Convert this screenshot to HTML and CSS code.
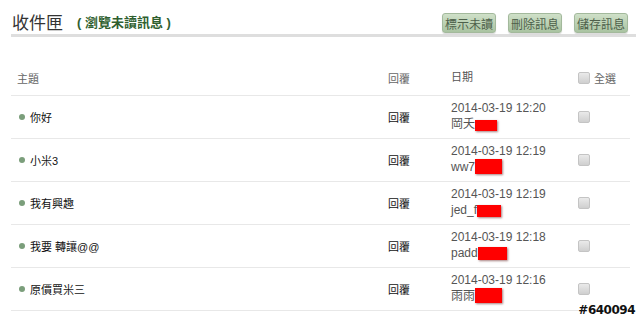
FILE: index.html
```html
<!DOCTYPE html>
<html lang="zh-Hant">
<head>
  <meta charset="UTF-8" />
  <title>收件匣</title>
  <link rel="stylesheet" href="styles.css">
</head>
<body>

  <div class="inbox">
    <!-- 標題列 -->
    <div class="top">
      <h1>收件匣</h1>
      <span class="unread">( 瀏覽未讀訊息 )</span>
      <div class="actions">
        <button>標示未讀</button>
        <button>刪除訊息</button>
        <button>儲存訊息</button>
      </div>
    </div>

    <!-- 訊息列表 -->
    <div class="list">
      <div class="row head">
        <div class="c-subj">主題</div>
        <div class="c-reply">回覆</div>
        <div class="c-date">日期</div>
        <div class="c-check"><span class="box"></span> 全選</div>
      </div>

      <div class="row">
        <div class="c-subj"><span class="dot"></span>你好</div>
        <div class="c-reply">回覆</div>
        <div class="c-date">2014-03-19 12:20<br>岡夭<span class="redact" style="width:22px;height:11px"></span></div>
        <div class="c-check"><span class="box"></span></div>
      </div>

      <div class="row">
        <div class="c-subj"><span class="dot"></span>小米3</div>
        <div class="c-reply">回覆</div>
        <div class="c-date">2014-03-19 12:19<br>ww7<span class="redact" style="width:27px;height:15px"></span></div>
        <div class="c-check"><span class="box"></span></div>
      </div>

      <div class="row">
        <div class="c-subj"><span class="dot"></span>我有興趣</div>
        <div class="c-reply">回覆</div>
        <div class="c-date">2014-03-19 12:19<br>jed_f<span class="redact" style="width:24px;height:12px"></span></div>
        <div class="c-check"><span class="box"></span></div>
      </div>

      <div class="row">
        <div class="c-subj"><span class="dot"></span>我要 轉讓@@</div>
        <div class="c-reply">回覆</div>
        <div class="c-date">2014-03-19 12:18<br>padd<span class="redact" style="width:29px;height:13px"></span></div>
        <div class="c-check"><span class="box"></span></div>
      </div>

      <div class="row">
        <div class="c-subj"><span class="dot"></span>原價買米三</div>
        <div class="c-reply">回覆</div>
        <div class="c-date">2014-03-19 12:16<br>雨雨<span class="redact" style="width:27px;height:15px"></span></div>
        <div class="c-check"><span class="box"></span></div>
      </div>
    </div>
  </div>

  <div class="mark">#640094</div>

</body>
</html>
```
FILE: styles.css
```css
body {
  margin: 0;
  background: #fff;
  font-family: 'Liberation Sans', 'Noto Sans CJK TC', sans-serif;
  color: #222;
  position: relative;
  height: 319px;
  overflow: hidden;
}

.inbox {
  padding: 0 4px 0 11px;
}

/* 標題列 */
.top {
  display: flex;
  align-items: center;
  height: 34px;
  border-bottom: 3px solid #dedede;
}

h1 {
  margin: 0 0 0 1px;
  font-size: 17px;
  font-weight: normal;
  color: #333;
  padding-top: 8px;
}

.unread {
  margin-left: 14px;
  padding-top: 9px;
  font-size: 13px;
  font-weight: bold;
  color: #2f5f2f;
}

.actions {
  margin-left: auto;
  margin-right: 8px;
  margin-top: 12px;
  display: flex;
  gap: 12px;
}

button {
  width: 54px;
  height: 20px;
  padding: 0;
  font-family: inherit;
  font-size: 12px;
  color: #4d5f4a;
  background: linear-gradient(#cfe0c8, #a9c3a1);
  border: 1px solid #a3b99c;
  border-radius: 3px;
  box-shadow: 0 1px 1px rgba(0,0,0,0.15);
}

/* 訊息列表 */
.list {
  margin-top: 24px;
  width: 619px;
}

.row {
  display: grid;
  grid-template-columns: 371px 63px 127px 58px;
  align-items: center;
  height: 42px;
  border-bottom: 1px solid #e8e8e8;
  font-size: 11px;
}

.row.head {
  height: 34px;
  color: #666;
}

.row > div {
  padding-left: 6px;
}

.c-subj {
  display: flex;
  align-items: center;
  color: #111;
}

.head .c-subj {
  color: #666;
}

.row:not(.head) .c-subj {
  padding-left: 8px;
}

.dot {
  width: 6px;
  height: 6px;
  border-radius: 50%;
  background: #7b9e7b;
  margin-right: 5px;
}

.c-reply {
  color: #111;
}

.head .c-reply {
  color: #666;
}

.c-date {
  font-size: 12px;
  line-height: 16px;
  color: #555;
  padding-bottom: 2px;
}

.head .c-date {
  font-size: 11px;
}

.c-check {
  display: flex;
  align-items: center;
  gap: 4px;
}

.box {
  display: inline-block;
  width: 10px;
  height: 10px;
  border: 1px solid #c4c4c4;
  border-radius: 2px;
  background: linear-gradient(#eaeaea, #cfcfcf);
}

.redact {
  display: inline-block;
  vertical-align: -3px;
  background: #f00;
  box-shadow: 1px 1px 2px rgba(80,0,0,0.5);
}

/* 浮水印 */
.mark {
  position: absolute;
  right: 5px;
  bottom: 2px;
  font-size: 12px;
  font-weight: bold;
  font-family: 'DejaVu Sans', sans-serif;
  color: #111;
  letter-spacing: -0.5px;
  text-shadow: -1px 0 #fff, 1px 0 #fff, 0 -1px #fff, 0 1px #fff;
}
```
